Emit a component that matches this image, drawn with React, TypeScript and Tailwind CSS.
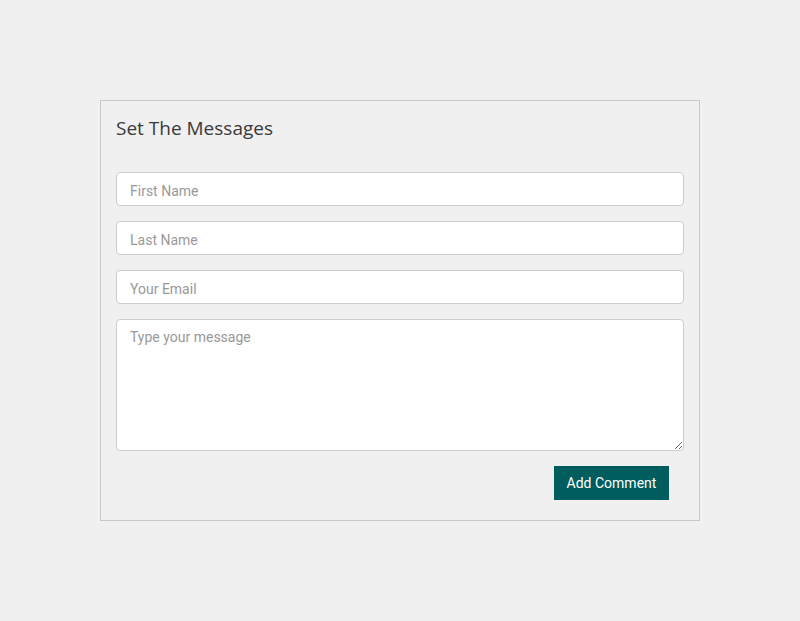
import React from "react";

export default function App() {
  const inputCls =
    "block w-full h-[34px] rounded-[4px] border border-[#cccccc] bg-white px-[13px] pt-[3px] pb-0 text-[14px] text-[#555] placeholder:text-[#999999] outline-none";
  return (
    <div
      className="min-h-[621px] w-full bg-[#f0f0f0] pt-[100px]"
      style={{ fontFamily: "Roboto, 'Liberation Sans', sans-serif" }}
    >
      <div className="mx-auto w-[600px] h-[421px] border border-[#c8c8c8] bg-[#f0f0f0] px-[15px] pt-[14px]">
        <h2
          className="text-[19px] leading-[27px] text-[#3a3a3a] font-normal"
          style={{ fontFamily: "'Open Sans', Lato, sans-serif" }}
        >
          Set The Messages
        </h2>
        <form className="mt-[30px] flex flex-col gap-[15px]">
          <input className={inputCls} placeholder="First Name" />
          <input className={inputCls} placeholder="Last Name" />
          <input className={inputCls} placeholder="Your Email" />
          <textarea
            className="block w-full h-[132px] rounded-[4px] border border-[#cccccc] bg-white px-[13px] py-[7px] text-[14px] text-[#555] placeholder:text-[#999999] outline-none"
            placeholder="Type your message"
          />
          <div className="flex justify-end pr-[15px]">
            <button
              type="button"
              className="h-[34px] w-[115px] bg-[#005d5e] text-[14px] text-white"
            >
              Add Comment
            </button>
          </div>
        </form>
      </div>
    </div>
  );
}
